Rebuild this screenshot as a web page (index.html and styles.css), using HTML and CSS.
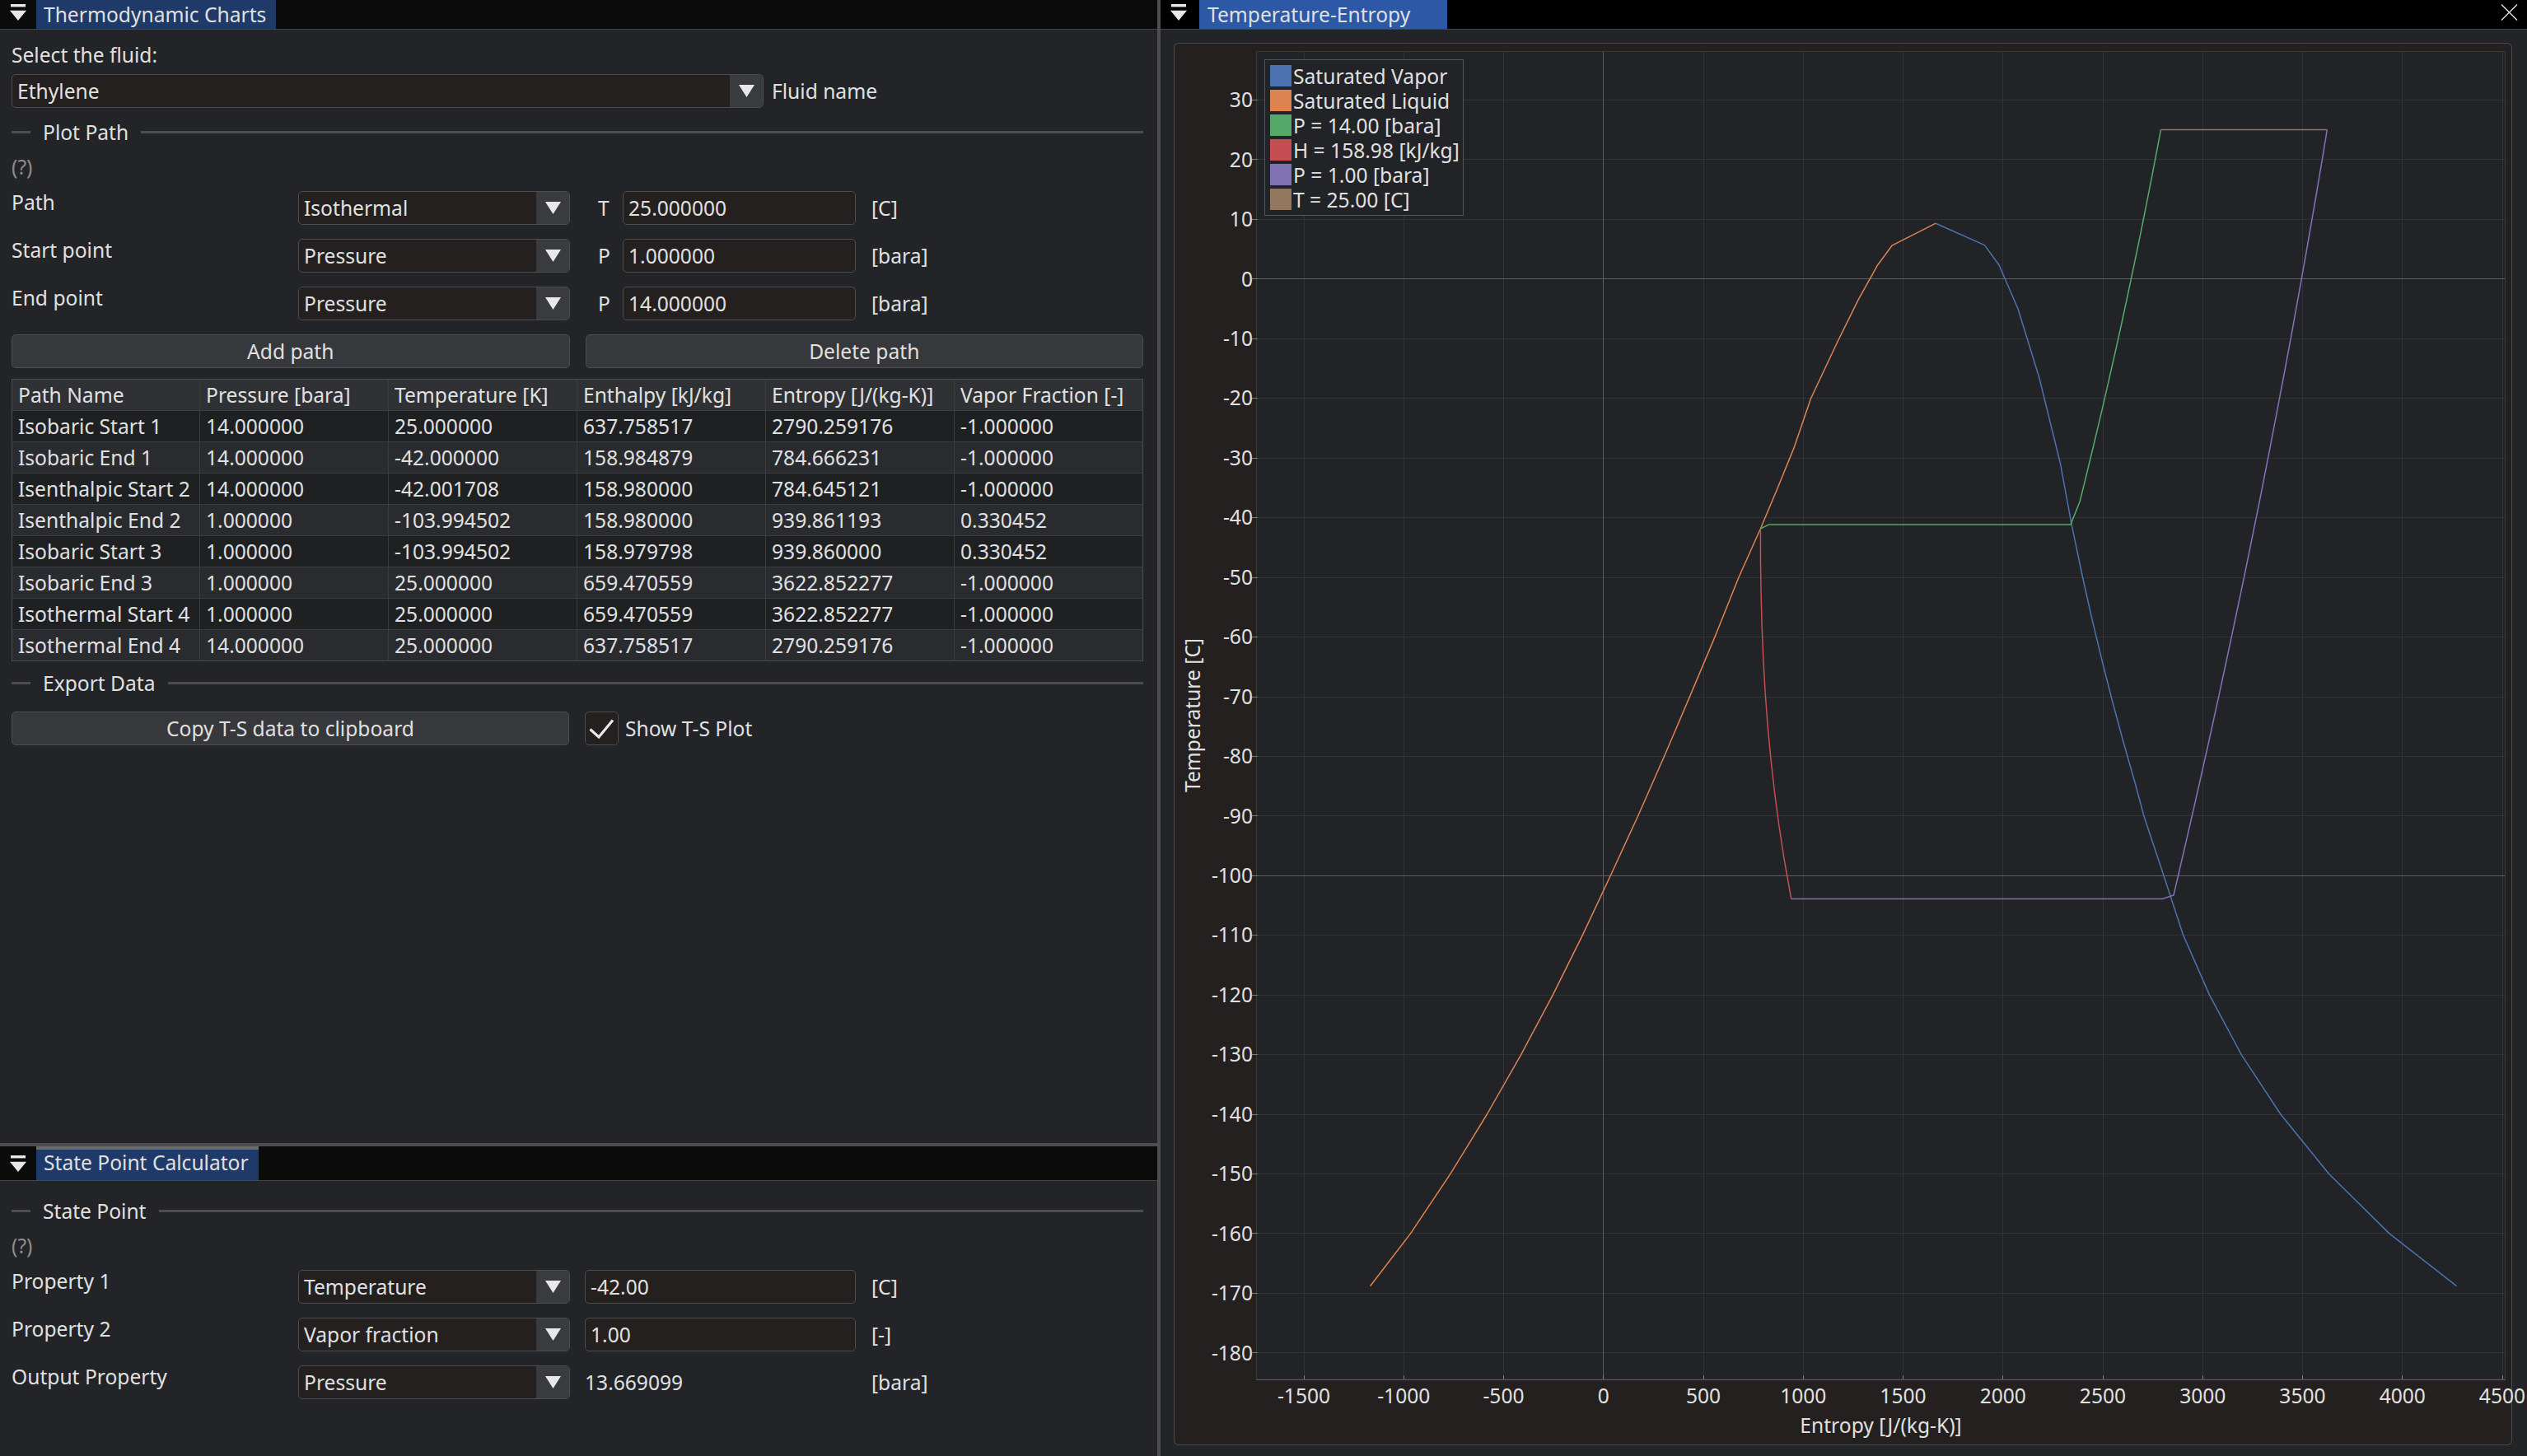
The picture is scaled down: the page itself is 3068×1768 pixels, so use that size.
FILE: index.html
```html
<!DOCTYPE html>
<html>
<head>
<meta charset="utf-8">
<link rel="stylesheet" href="styles.css">
</head>
<body>
<div class="app">
  <div class="left">
    <section class="win win-top">
      <div class="titlebar">
        <div class="menu-btn"><svg width="20" height="20" viewBox="0 0 20 20"><rect x="1" y="0" width="18" height="3.4" fill="#e8e8e8"/><path d="M0 7.7H20L10 20Z" fill="#e8e8e8"/></svg></div>
        <div class="tab">Thermodynamic Charts</div>
      </div>
      <div class="content">
        <div class="line">Select the fluid:</div>
        <div class="fluid-row">
          <div class="combo fluid-combo"><div class="combo-text">Ethylene</div><div class="combo-arrow"><svg width="19" height="15" viewBox="0 0 19 15"><path d="M0 0H19L9.5 15Z" fill="#e8e8e8"/></svg></div></div>
          <div class="fluid-name">Fluid name</div>
        </div>
        <div class="sep">Plot Path</div>
        <div class="help">(?)</div>
        <div class="frow">
          <div class="flabel">Path</div>
          <div class="combo"><div class="combo-text">Isothermal</div><div class="combo-arrow"><svg width="19" height="15" viewBox="0 0 19 15"><path d="M0 0H19L9.5 15Z" fill="#e8e8e8"/></svg></div></div>
          <div class="axis-letter">T</div>
          <div class="input">25.000000</div>
          <div class="unit">[C]</div>
        </div>
        <div class="frow">
          <div class="flabel">Start point</div>
          <div class="combo"><div class="combo-text">Pressure</div><div class="combo-arrow"><svg width="19" height="15" viewBox="0 0 19 15"><path d="M0 0H19L9.5 15Z" fill="#e8e8e8"/></svg></div></div>
          <div class="axis-letter">P</div>
          <div class="input">1.000000</div>
          <div class="unit">[bara]</div>
        </div>
        <div class="frow">
          <div class="flabel">End point</div>
          <div class="combo"><div class="combo-text">Pressure</div><div class="combo-arrow"><svg width="19" height="15" viewBox="0 0 19 15"><path d="M0 0H19L9.5 15Z" fill="#e8e8e8"/></svg></div></div>
          <div class="axis-letter">P</div>
          <div class="input">14.000000</div>
          <div class="unit">[bara]</div>
        </div>
        <div class="btn-row">
          <div class="btn">Add path</div>
          <div class="btn">Delete path</div>
        </div>
        <div class="table">
          <div class="trow thead"><div>Path Name</div><div>Pressure [bara]</div><div>Temperature [K]</div><div>Enthalpy [kJ/kg]</div><div>Entropy [J/(kg-K)]</div><div>Vapor Fraction [-]</div></div>
          <div class="trow odd"><div>Isobaric Start 1</div><div>14.000000</div><div>25.000000</div><div>637.758517</div><div>2790.259176</div><div>-1.000000</div></div>
          <div class="trow even"><div>Isobaric End 1</div><div>14.000000</div><div>-42.000000</div><div>158.984879</div><div>784.666231</div><div>-1.000000</div></div>
          <div class="trow odd"><div>Isenthalpic Start 2</div><div>14.000000</div><div>-42.001708</div><div>158.980000</div><div>784.645121</div><div>-1.000000</div></div>
          <div class="trow even"><div>Isenthalpic End 2</div><div>1.000000</div><div>-103.994502</div><div>158.980000</div><div>939.861193</div><div>0.330452</div></div>
          <div class="trow odd"><div>Isobaric Start 3</div><div>1.000000</div><div>-103.994502</div><div>158.979798</div><div>939.860000</div><div>0.330452</div></div>
          <div class="trow even"><div>Isobaric End 3</div><div>1.000000</div><div>25.000000</div><div>659.470559</div><div>3622.852277</div><div>-1.000000</div></div>
          <div class="trow odd"><div>Isothermal Start 4</div><div>1.000000</div><div>25.000000</div><div>659.470559</div><div>3622.852277</div><div>-1.000000</div></div>
          <div class="trow even"><div>Isothermal End 4</div><div>14.000000</div><div>25.000000</div><div>637.758517</div><div>2790.259176</div><div>-1.000000</div></div>
        </div>
        <div class="sep sep-export">Export Data</div>
        <div class="copy-row">
          <div class="btn copy-btn">Copy T-S data to clipboard</div>
          <div class="check"><svg width="39" height="39" viewBox="0 0 39 39"><path d="M5.5 20.5L16 30L33 9.5" fill="none" stroke="#e8e8e8" stroke-width="3.2" stroke-linejoin="miter"/></svg></div>
          <div class="check-label">Show T-S Plot</div>
        </div>
      </div>
    </section>
    <div class="hsplit"></div>
    <section class="win win-bottom">
      <div class="titlebar titlebar-tall">
        <div class="menu-btn"><svg width="20" height="20" viewBox="0 0 20 20"><rect x="1" y="0" width="18" height="3.4" fill="#e8e8e8"/><path d="M0 7.7H20L10 20Z" fill="#e8e8e8"/></svg></div>
        <div class="tab tab-overline">State Point Calculator</div>
      </div>
      <div class="content content-state">
        <div class="sep sep-first">State Point</div>
        <div class="help">(?)</div>
        <div class="frow">
          <div class="flabel">Property 1</div>
          <div class="combo"><div class="combo-text">Temperature</div><div class="combo-arrow"><svg width="19" height="15" viewBox="0 0 19 15"><path d="M0 0H19L9.5 15Z" fill="#e8e8e8"/></svg></div></div>
          <div class="input input-wide">-42.00</div>
          <div class="unit">[C]</div>
        </div>
        <div class="frow">
          <div class="flabel">Property 2</div>
          <div class="combo"><div class="combo-text">Vapor fraction</div><div class="combo-arrow"><svg width="19" height="15" viewBox="0 0 19 15"><path d="M0 0H19L9.5 15Z" fill="#e8e8e8"/></svg></div></div>
          <div class="input input-wide">1.00</div>
          <div class="unit">[-]</div>
        </div>
        <div class="frow">
          <div class="flabel">Output Property</div>
          <div class="combo"><div class="combo-text">Pressure</div><div class="combo-arrow"><svg width="19" height="15" viewBox="0 0 19 15"><path d="M0 0H19L9.5 15Z" fill="#e8e8e8"/></svg></div></div>
          <div class="out-value">13.669099</div>
          <div class="unit">[bara]</div>
        </div>
      </div>
    </section>
  </div>
  <div class="vsplit"></div>
  <section class="win right">
    <div class="titlebar titlebar-black">
      <div class="menu-btn menu-btn-right"><svg width="20" height="20" viewBox="0 0 20 20"><rect x="1" y="0" width="18" height="3.4" fill="#e8e8e8"/><path d="M0 7.7H20L10 20Z" fill="#e8e8e8"/></svg></div>
      <div class="tab tab-active">Temperature-Entropy</div>
      <div class="close"><svg width="21" height="20" viewBox="0 0 21 20"><path d="M1 0.5L20 19.5M20 0.5L1 19.5" stroke="#e0e0e0" stroke-width="1.4"/></svg></div>
    </div>
    <div class="plot-wrap">
      <div class="plot-frame">
        <svg class="plot" width="1625" height="1703" viewBox="1425 52 1625 1703">
          <rect x="1525.5" y="62.5" width="1516" height="1612.5" fill="#222327" stroke="#38393c" stroke-width="1"/>
          <path class="grid" d="M1526 121.5H3041M1526 193.5H3041M1526 266.5H3041M1526 411.5H3041M1526 483.5H3041M1526 556.5H3041M1526 628.5H3041M1526 701.5H3041M1526 773.5H3041M1526 846.5H3041M1526 918.5H3041M1526 990.5H3041M1526 1135.5H3041M1526 1208.5H3041M1526 1280.5H3041M1526 1353.5H3041M1526 1425.5H3041M1526 1497.5H3041M1526 1570.5H3041M1526 1642.5H3041"/>
          <path class="grid" d="M1583.5 63V1675M1704.5 63V1675M1825.5 63V1675M2068.5 63V1675M2189.5 63V1675M2310.5 63V1675M2431.5 63V1675M2553.5 63V1675M2674.5 63V1675M2795.5 63V1675M2916.5 63V1675M3038.5 63V1675"/>
          <path class="zero" d="M1526 338.5H3041M1526 1063.5H3041M1946.5 63V1675"/>
          <path class="axis" d="M1525 1675.5H3042"/>
          <path class="ticks" d="M1520 121.5H1527M1520 193.5H1527M1520 266.5H1527M1520 338.5H1527M1520 411.5H1527M1520 483.5H1527M1520 556.5H1527M1520 628.5H1527M1520 701.5H1527M1520 773.5H1527M1520 846.5H1527M1520 918.5H1527M1520 990.5H1527M1520 1063.5H1527M1520 1135.5H1527M1520 1208.5H1527M1520 1280.5H1527M1520 1353.5H1527M1520 1425.5H1527M1520 1497.5H1527M1520 1570.5H1527M1520 1642.5H1527"/>
          <path class="ticks" d="M1583.5 1670V1675M1704.5 1670V1675M1825.5 1670V1675M1946.5 1670V1675M2068.5 1670V1675M2189.5 1670V1675M2310.5 1670V1675M2431.5 1670V1675M2553.5 1670V1675M2674.5 1670V1675M2795.5 1670V1675M2916.5 1670V1675M3038.5 1670V1675"/>
          <g class="ylab">
            <text x="1521" y="130">30</text>
            <text x="1521" y="202.5">20</text>
            <text x="1521" y="275">10</text>
            <text x="1521" y="347.5">0</text>
            <text x="1521" y="420">-10</text>
            <text x="1521" y="492.3">-20</text>
            <text x="1521" y="564.8">-30</text>
            <text x="1521" y="637.2">-40</text>
            <text x="1521" y="709.7">-50</text>
            <text x="1521" y="782.1">-60</text>
            <text x="1521" y="854.6">-70</text>
            <text x="1521" y="927">-80</text>
            <text x="1521" y="999.5">-90</text>
            <text x="1521" y="1071.9">-100</text>
            <text x="1521" y="1144.4">-110</text>
            <text x="1521" y="1216.8">-120</text>
            <text x="1521" y="1289.3">-130</text>
            <text x="1521" y="1361.7">-140</text>
            <text x="1521" y="1434.2">-150</text>
            <text x="1521" y="1506.6">-160</text>
            <text x="1521" y="1579.1">-170</text>
            <text x="1521" y="1651.5">-180</text>
          </g>
          <g class="xlab">
            <text x="1583" y="1704">-1500</text>
            <text x="1704.3" y="1704">-1000</text>
            <text x="1825.5" y="1704">-500</text>
            <text x="1946.8" y="1704">0</text>
            <text x="2068" y="1704">500</text>
            <text x="2189.3" y="1704">1000</text>
            <text x="2310.5" y="1704">1500</text>
            <text x="2431.8" y="1704">2000</text>
            <text x="2553" y="1704">2500</text>
            <text x="2674.3" y="1704">3000</text>
            <text x="2795.5" y="1704">3500</text>
            <text x="2916.8" y="1704">4000</text>
            <text x="3038" y="1704">4500</text>
          </g>
          <text class="xtitle" x="2283.5" y="1740">Entropy [J/(kg-K)]</text>
          <text class="ytitle" transform="translate(1457 868.5) rotate(-90)">Temperature [C]</text>
          <polyline class="s-liq" points="1663.5,1561.7 1712.5,1497.9 1760.9,1425.45 1805.4,1353 1846.7,1280.55 1885.3,1208.1 1921.3,1135.65 1955.3,1063.2 1988.7,990.75 2020.6,918.3 2051.5,845.85 2082,773.4 2111,701 2137.4,642 2158,593 2177.8,544.4 2198.5,484 2230.8,415.3 2256.3,363.6 2279.3,322.3 2297,298.2 2350.2,271.2"/>
          <polyline class="s-vap" points="2350.2,271.2 2409.4,297.6 2427,321.7 2450,375 2475.7,458.3 2501.2,561.7 2515,636.3 2528.3,700 2539.5,750 2552.2,802.8 2564.2,850 2577.7,900 2591.9,950 2603.3,992.2 2622.6,1050 2639,1100 2650.7,1135.65 2682.5,1208.1 2721.2,1280.55 2768.9,1353 2827.6,1425.45 2900.9,1497.9 2982.5,1561.7"/>
          <polyline class="s-p14" points="2137.4,642 2147.7,636.9 2514,636.9 2525.2,608.7 2532.3,580 2542,540 2551.5,500 2560.7,460 2569.8,420 2578.6,380 2587.1,340 2595.5,300 2603.6,260 2611.5,220 2619.2,180 2623.4,157.6"/>
          <polyline class="s-h" points="2137.4,642 2137.5,682 2138.1,722 2139.2,762 2140.9,802 2143.2,842 2146.2,882 2150,922 2154.5,962 2159.8,1002 2165.9,1042 2174.7,1091.5"/>
          <polyline class="s-p1" points="2174.7,1091.5 2625.2,1091.5 2639,1087 2647.6,1050 2659.2,1000 2670.6,950 2681.8,900 2692.8,850 2703.6,800 2714.2,750 2724.7,700 2734.9,650 2745,600 2754.8,550 2764.4,500 2773.9,450 2783.2,400 2792.2,350 2801.1,300 2809.8,250 2818.3,200 2825.3,157.6"/>
          <polyline class="s-t" points="2623.4,157.6 2825.3,157.6"/>
        </svg>
        <div class="legend">
          <div class="leg-item"><span class="sw sw-vap"></span>Saturated Vapor</div>
          <div class="leg-item"><span class="sw sw-liq"></span>Saturated Liquid</div>
          <div class="leg-item"><span class="sw sw-p14"></span>P = 14.00 [bara]</div>
          <div class="leg-item"><span class="sw sw-h"></span>H = 158.98 [kJ/kg]</div>
          <div class="leg-item"><span class="sw sw-p1"></span>P = 1.00 [bara]</div>
          <div class="leg-item"><span class="sw sw-t"></span>T = 25.00 [C]</div>
        </div>
      </div>
    </div>
  </section>
</div>
</body>
</html>
```

FILE: styles.css
```css
* { box-sizing: border-box; margin: 0; padding: 0; }
html, body { width: 3068px; height: 1768px; overflow: hidden; background: #232427; }
body {
  font-family: "Noto Sans", "Open Sans", sans-serif;
  font-size: 24.6px;
  line-height: 25px;
  color: #e0e0e0;
}
.app { display: flex; width: 3068px; height: 1768px; }
.left { width: 1405px; flex: none; display: flex; flex-direction: column; }
.vsplit { width: 4px; flex: none; background: #4e4e50; }
.hsplit { height: 4px; flex: none; background: #4e4e50; }
.win { background: #232427; display: flex; flex-direction: column; overflow: hidden; }
.win-top { height: 1388px; flex: none; }
.win-bottom { flex: 1; }
.right { flex: 1; min-width: 0; }

.titlebar {
  height: 36px; flex: none; background: #0b0b0b;
  border-bottom: 1px solid #2b4a82;
  display: flex; align-items: stretch;
}
.titlebar-tall { height: 42px; }
.titlebar-black { background: #000; }
.menu-btn { width: 44px; flex: none; padding: 5px 0 0 12px; }
.menu-btn svg { display: block; }
.titlebar-tall .menu-btn { padding-top: 11px; }
.menu-btn-right { width: 47px; }
.tab { background: #1f3a69; padding: 5px 12px 0 9px; white-space: nowrap; }
.tab-overline { border-top: 4px solid #6a6a6a; padding-top: 3px; }
.tab-active { background: #2c58a5; padding-left: 10px; padding-right: 45px; }
.close { margin-left: auto; padding: 5px 11px 0 0; }
.close svg { display: block; }

.content { padding: 18px 17px 0 14px; display: flex; flex-direction: column; }
.content-state { padding-top: 24px; }
.line { height: 25px; }

.fluid-row { display: flex; height: 41px; margin-top: 11px; align-items: center; }
.fluid-name { margin-left: 10px; }

.sep { display: flex; align-items: center; height: 25px; margin-top: 17px; white-space: nowrap; }
.sep::before { content: ""; width: 23px; height: 3px; background: #4d4d4f; margin-right: 15px; }
.sep::after { content: ""; flex: 1; height: 3px; background: #4d4d4f; margin-left: 15px; }
.sep-export { margin-top: 14px; }
.sep-first { margin-top: 0; }

.help { color: #8d8d8d; margin-top: 17px; height: 25px; }

.frow { display: flex; height: 41px; margin-top: 17px; }
.flabel { width: 348px; flex: none; padding-top: 1px; }
.combo {
  display: flex; width: 330px; height: 41px; flex: none;
  background: #24201f; border: 1px solid #4d4d4f; border-radius: 5px; overflow: hidden;
}
.fluid-combo { width: 913px; }
.combo-text { flex: 1; padding-left: 6px; line-height: 39px; white-space: nowrap; }
.combo-arrow { width: 40px; background: #3a3b3e; display: flex; align-items: center; justify-content: center; }
.combo-arrow svg { display: block; }
.axis-letter { width: 30px; margin-left: 34px; line-height: 41px; }
.input {
  width: 283px; height: 41px; flex: none;
  background: #24201f; border: 1px solid #4d4d4f; border-radius: 5px;
  padding-left: 6px; line-height: 39px;
}
.input-wide { width: 329px; margin-left: 18px; }
.unit { margin-left: 19px; line-height: 41px; }
.out-value { width: 329px; margin-left: 18px; line-height: 41px; }

.btn-row { display: flex; gap: 19px; margin-top: 17px; }
.btn {
  flex: 1; height: 41px; background: #37383b; border: 1px solid #4d4e51; border-radius: 5px;
  text-align: center; line-height: 39px; white-space: nowrap;
}

.table { margin-top: 13px; border-top: 1px solid #4b4c4f; }
.trow { display: grid; grid-template-columns: repeat(6, 1fr); height: 38px; }
.trow > div {
  border-bottom: 1px solid #3b3c3f; border-right: 1px solid #3b3c3f;
  padding-left: 7px; line-height: 37px; white-space: nowrap; overflow: hidden;
}
.trow > div:first-child { border-left: 1px solid #4b4c4f; }
.trow > div:last-child { border-right-color: #4b4c4f; }
.trow:last-child > div { border-bottom-color: #4b4c4f; }
.thead { background: #303134; }
.odd { background: #1f2022; }
.even { background: #2a2b2e; }

.copy-row { display: flex; margin-top: 22px; height: 41px; align-items: center; }
.copy-btn { flex: none; width: 677px; }
.check {
  width: 41px; height: 41px; margin-left: 19px;
  background: #24201f; border: 1px solid #4d4d4f; border-radius: 5px;
}
.check svg { display: block; }
.check-label { margin-left: 8px; line-height: 41px; }

.plot-wrap { flex: 1; padding: 16px 18px 13px 16px; }
.plot-frame {
  position: relative; width: 1625px; height: 1703px;
  background: #24201f; border-radius: 6px; box-shadow: inset 0 0 0 1px #4a4a4c;
}
.plot { display: block; overflow: visible; }
.plot text { font-family: "Noto Sans", "Open Sans", sans-serif; font-size: 24.6px; fill: #e0e0e0; }
.ylab text { text-anchor: end; }
.xlab text { text-anchor: middle; }
.xtitle, .ytitle { text-anchor: middle; }
.grid { stroke: #313236; stroke-width: 1; fill: none; }
.zero { stroke: #5e5f62; stroke-width: 1; fill: none; }
.axis { stroke: #5a5a5c; stroke-width: 1; fill: none; }
.ticks { stroke: #7a7a7c; stroke-width: 1; fill: none; }
.plot polyline { fill: none; stroke-width: 1.5; stroke-linejoin: round; }
.s-vap { stroke: #4c72b0; }
.s-liq { stroke: #dd8452; }
.s-p14 { stroke: #55a868; }
.s-h { stroke: #c44e52; }
.s-p1 { stroke: #8172b3; }
.s-t { stroke: #937860; }

.legend {
  position: absolute; left: 110px; top: 20px;
  background: #222327; border: 1px solid #555557;
  padding: 4px 4px 4px 6px;
}
.leg-item { display: flex; align-items: center; height: 30px; white-space: nowrap; }
.sw { width: 26px; height: 26px; margin-right: 2px; flex: none; }
.sw-vap { background: #4c72b0; }
.sw-liq { background: #dd8452; }
.sw-p14 { background: #55a868; }
.sw-h { background: #c44e52; }
.sw-p1 { background: #8172b3; }
.sw-t { background: #937860; }
```
